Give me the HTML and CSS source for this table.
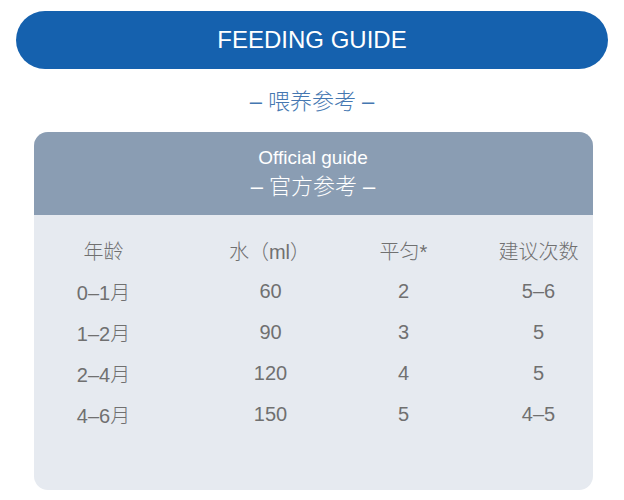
FILE: index.html
```html
<!DOCTYPE html>
<html lang="zh">
<head>
<meta charset="utf-8">
<link rel="stylesheet" href="styles.css">
</head>
<body>
<div class="page">
  <div class="pill">FEEDING GUIDE</div>
  <div class="subtitle">– 喂养参考 –</div>
  <div class="card">
    <div class="card-head">
      <div class="en">Official guide</div>
      <div class="zh">– 官方参考 –</div>
    </div>
    <div class="card-body">
      <div class="grid">
        <div class="cell">年龄</div><div class="cell">水（ml）</div><div class="cell">平匀*</div><div class="cell">建议次数</div>
        <div class="cell">0–1月</div><div class="cell num">60</div><div class="cell">2</div><div class="cell">5–6</div>
        <div class="cell">1–2月</div><div class="cell num">90</div><div class="cell">3</div><div class="cell">5</div>
        <div class="cell">2–4月</div><div class="cell num">120</div><div class="cell">4</div><div class="cell">5</div>
        <div class="cell">4–6月</div><div class="cell num">150</div><div class="cell">5</div><div class="cell">4–5</div>
      </div>
    </div>
  </div>
</div>
</body>
</html>
```
FILE: styles.css
```css
* { box-sizing: border-box; }
html, body { margin: 0; padding: 0; background: #ffffff; }
body {
  font-family: "Liberation Sans", "Noto Sans CJK SC", sans-serif;
  font-weight: 300;
  width: 624px;
  height: 500px;
  overflow: hidden;
}
.page {
  padding: 11px 16px 0 16px;
  display: flex;
  flex-direction: column;
  align-items: center;
}
.pill {
  width: 592px;
  height: 58px;
  border-radius: 29px;
  background: #1561ae;
  color: #ffffff;
  font-size: 24px;
  display: flex;
  align-items: center;
  justify-content: center;
}
.subtitle {
  margin-top: 19px;
  height: 28px;
  line-height: 28px;
  font-size: 22px;
  color: #4577b1;
}
.card {
  margin-top: 16px;
  width: 559px;
  margin-left: 2px;
  height: 358px;
  border-radius: 14px;
  overflow: hidden;
  background: #e6eaf0;
  display: flex;
  flex-direction: column;
}
.card-head {
  height: 83px;
  background: #8a9db3;
  color: #ffffff;
  display: flex;
  flex-direction: column;
  align-items: center;
  padding-top: 14px;
}
.card-head .en {
  font-size: 19px;
  line-height: 24px;
}
.card-head .zh {
  font-size: 22px;
  line-height: 30px;
  margin-top: 2px;
}
.card-body {
  padding: 15px 0 0 20px;
}
.grid {
  display: grid;
  grid-template-columns: 166px 134px 135px 100px;
  grid-auto-rows: 41px;
  align-items: center;
  color: #707070;
  font-size: 20px;
}
.cell {
  width: 100px;
  text-align: center;
  white-space: nowrap;
}
.num { padding-left: 2px; }
```
